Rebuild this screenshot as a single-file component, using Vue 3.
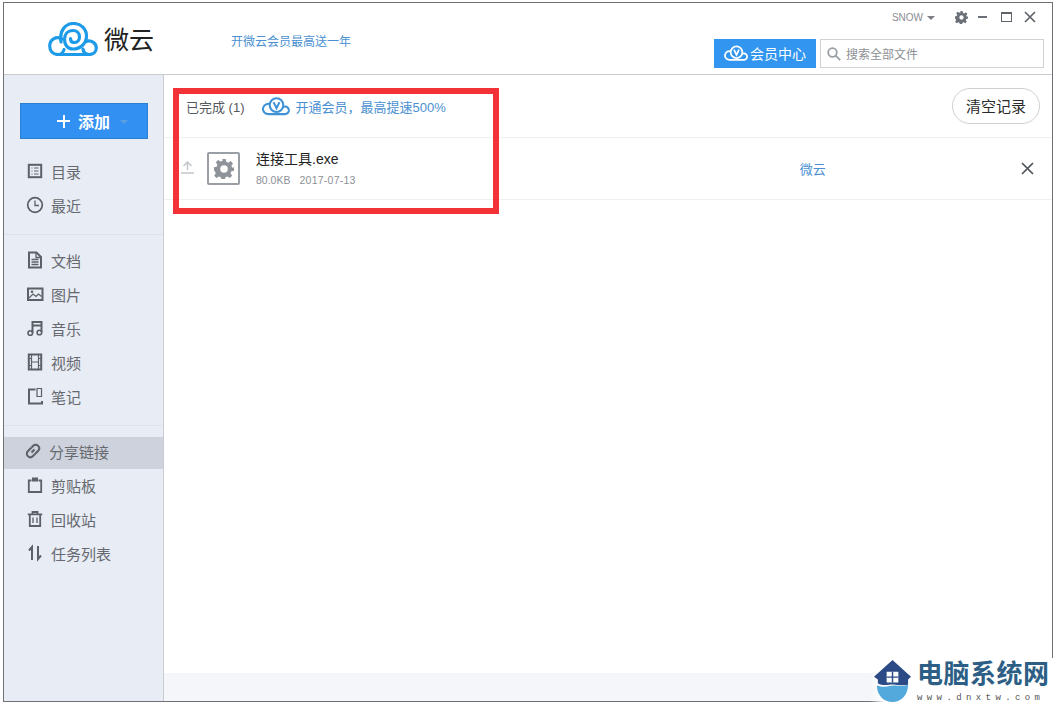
<script setup>
const groups = [
  [
    { icon: 'list', label: '目录' },
    { icon: 'clock', label: '最近' },
  ],
  [
    { icon: 'doc', label: '文档' },
    { icon: 'image', label: '图片' },
    { icon: 'music', label: '音乐' },
    { icon: 'film', label: '视频' },
    { icon: 'note', label: '笔记' },
  ],
  [
    { icon: 'link', label: '分享链接', active: true },
    { icon: 'clip', label: '剪贴板' },
    { icon: 'trash', label: '回收站' },
    { icon: 'sort', label: '任务列表' },
  ],
]
</script>

<template>
  <div class="window">
    <header class="topbar">
      <div class="brand">
        <svg class="logo" width="50" height="34" viewBox="0 0 50 34" fill="none" stroke="#1d9be8" stroke-width="3.200" stroke-linecap="round">
          <path d="M13 20C11 8 18 1.500 25.500 1.500C33 1.500 38.500 7 38.500 14C38.500 22 32 27 25 27C19 27 16.500 22 16.500 17.500C16.500 12 20 8.500 25 8.500C29 8.500 31.500 11.500 31.500 15C31.500 18.500 29 20.500 26 20.500C23.500 20.500 22.500 18.500 22.500 16.500" />
          <path d="M14 17C8 13.500 1.700 18 1.700 24C1.700 29 5 32.500 10 32.500H41C45.500 32.500 48.300 29.500 48.300 26C48.300 21 43 17.500 38 19.500" />
          <path d="M10 32.500C13 32.500 15.500 30 16 27.500M41 32.500C38 32.500 35.500 30.500 35 27" />
        </svg>
        <span class="brand-name">微云</span>
      </div>
      <a class="promo">开微云会员最高送一年</a>
      <div class="top-right">
        <div class="window-bar">
          <span class="user">SNOW</span>
          <i class="caret"></i>
          <svg class="gear" width="13" height="13" viewBox="0 0 24 24">
            <path fill="#6b7078" fill-rule="evenodd" d="M10 0h4l.7 3.400 2.400 1 2.900-1.900 2.800 2.800-1.900 2.900 1 2.400L24 10v4l-3.100.7-1 2.400 1.900 2.900-2.800 2.800-2.900-1.900-2.400 1-.7 3.100h-4l-.7-3.100-2.400-1-2.900 1.900-2.800-2.800 1.900-2.900-1-2.400L0 14v-4l3.100-.7 1-2.400-1.900-2.900L5 1.200l2.900 1.900 2.400-1zM12 8a4 4 0 1 0 0 8 4 4 0 0 0 0-8z" />
          </svg>
          <i class="min"></i>
          <i class="max"></i>
          <svg class="close" width="12" height="12" viewBox="0 0 12 12" stroke="#5f646b" stroke-width="1.700"><path d="M1 1l10 10M11 1L1 11" /></svg>
        </div>
        <div class="tools">
          <button class="vip-btn">
            <svg width="25" height="16" viewBox="0 0 34 22" fill="none" stroke="#fff" stroke-width="2.400">
              <path d="M10.500 9.500A6 6 0 1 0 7 20.500H27.500A4.500 4.500 0 1 0 25 12" />
              <circle cx="17" cy="10" r="8" fill="#3296f0" />
              <path d="M13.500 6.500l3.500 7 3.500-7" />
            </svg>
            <span>会员中心</span>
          </button>
          <label class="search">
            <svg width="14" height="14" viewBox="0 0 14 14" fill="none" stroke="#9a9fa6" stroke-width="1.800"><circle cx="5.500" cy="5.500" r="4.300" /><path d="M8.700 8.700l4.500 4.500" /></svg>
            <span>搜索全部文件</span>
          </label>
        </div>
      </div>
    </header>

    <div class="body">
      <aside class="sidebar">
        <div class="add-wrap">
          <button class="add-btn"><b class="plus"></b><span>添加</span><i class="add-caret"></i></button>
        </div>
        <nav class="groups">
          <ul v-for="(group, i) in groups" :key="i" class="group">
            <li v-for="item in group" :key="item.label" class="item" :class="{ active: item.active }">
              <svg class="ico" width="18" height="18" viewBox="0 0 18 18" fill="none" stroke="#5c6067" stroke-width="2">
                <template v-if="item.icon === 'list'">
                  <rect x="2.800" y="2.800" width="12.400" height="12.400" />
                  <path stroke-width="1.100" d="M5.500 6h1M8 6h4.500M5.500 9h1M8 9h4.500M5.500 12h1M8 12h4.500" />
                </template>
                <template v-else-if="item.icon === 'clock'">
                  <circle cx="9" cy="9" r="7.300" stroke-width="1.700" />
                  <path stroke-width="1.300" d="M9 4.500V9.500H13" />
                </template>
                <template v-else-if="item.icon === 'doc'">
                  <path d="M3 1.500h7.500l4.500 4.500v10.500H3z" />
                  <path stroke-width="1.300" d="M10 1.500v5h5M5.500 8.500h7M5.500 11h7M5.500 13.500h7" />
                </template>
                <template v-else-if="item.icon === 'image'">
                  <rect x="2" y="3.500" width="14.500" height="11.500" />
                  <path stroke-width="1.200" d="M3 13l4-4 3 2.500 2.500-2.500 3 2.500" />
                  <circle cx="6" cy="6.800" r="1.300" fill="#5c6067" stroke="none" />
                </template>
                <template v-else-if="item.icon === 'music'">
                  <path d="M6.500 14V3H15.500V13" />
                  <path d="M6.500 6.500h9" />
                  <circle cx="4.300" cy="14" r="2.300" stroke-width="1.600" />
                  <circle cx="13.400" cy="13.500" r="2.300" stroke-width="1.600" />
                </template>
                <template v-else-if="item.icon === 'film'">
                  <rect x="2.800" y="1.500" width="12.400" height="15" />
                  <path stroke-width="1.200" d="M5.500 1.500v15M12.500 1.500v15M5.500 9h7M3 5.500h2.500M3 12.500h2.500M12.500 5.500h2.500M12.500 12.500h2.500" />
                </template>
                <template v-else-if="item.icon === 'note'">
                  <path d="M9.500 2.500H3v14h13v-2.500" />
                  <path stroke-width="1.200" d="M11 1.500h4.500V9.500H11z" />
                </template>
                <template v-else-if="item.icon === 'link'">
                  <path stroke-width="2" d="M7.500 5.500L4 9c-3.500 3.500 1.500 8.500 5 5l1.500-1.500" />
                  <path stroke-width="2" d="M10.500 12.500L14 9c3.500-3.500-1.500-8.500-5-5L7.500 5.500M7.500 10.500l3-3" />
                </template>
                <template v-else-if="item.icon === 'clip'">
                  <path stroke-width="1.800" d="M5.500 4.500H2.800v11.500h12.400V4.500H12.500" />
                  <rect x="6" y="1.500" width="6" height="4" fill="#5c6067" stroke="none" />
                </template>
                <template v-else-if="item.icon === 'trash'">
                  <path stroke-width="1.800" d="M1.800 4.300h14.400M6.500 4V2h5v2M3.800 4.500V16h10.400V4.500" />
                  <path stroke-width="1.300" d="M7 7.500v5.500M11 7.500v5.500" />
                </template>
                <template v-else>
                  <path stroke-width="2" d="M6 16V3L3 6.500M12 2v13l3-3.500" />
                </template>
              </svg>
              <span>{{ item.label }}</span>
            </li>
          </ul>
        </nav>
      </aside>

      <main class="content">
        <div class="list-head">
          <span class="done">已完成 (1)</span>
          <svg class="vip-mark" width="29" height="20" viewBox="0 0 34 22" fill="none" stroke="#3f92d6" stroke-width="2.400">
            <path d="M10.500 9.500A6 6 0 1 0 7 20.500H27.500A4.500 4.500 0 1 0 25 12" />
            <circle cx="17" cy="10" r="8" fill="#fff" />
            <path d="M13.500 6.500l3.500 7 3.500-7" />
          </svg>
          <a class="speed">开通会员，最高提速500%</a>
          <button class="clear">清空记录</button>
        </div>
        <div class="file-row">
          <svg class="upload" width="13" height="15" viewBox="0 0 13 15" fill="none" stroke="#c3c6ca" stroke-width="1.500"><path d="M6.500 10V2M2.500 6l4-4 4 4M0 13h13" /></svg>
          <div class="file-icon">
            <svg width="20" height="20" viewBox="0 0 24 24">
              <path fill="#8f949b" fill-rule="evenodd" d="M10 0h4l.7 3.400 2.400 1 2.900-1.900 2.800 2.800-1.900 2.900 1 2.400L24 10v4l-3.100.7-1 2.400 1.900 2.900-2.800 2.800-2.900-1.900-2.400 1-.7 3.100h-4l-.7-3.100-2.400-1-2.900 1.900-2.800-2.800 1.900-2.900-1-2.400L0 14v-4l3.100-.7 1-2.400-1.900-2.900L5 1.200l2.900 1.900 2.400-1zM12 7.500a4.500 4.500 0 1 0 0 9 4.500 4.500 0 0 0 0-9z" />
            </svg>
          </div>
          <div class="file-info">
            <div class="file-name">连接工具.exe</div>
            <div class="file-meta"><span>80.0KB</span><span class="file-date">2017-07-13</span></div>
          </div>
          <a class="source">微云</a>
          <svg class="remove" width="13" height="13" viewBox="0 0 13 13" stroke="#4f5359" stroke-width="1.700"><path d="M1 1l11 11M12 1L1 12" /></svg>
        </div>
        <div class="spacer"></div>
        <div class="status"></div>
      </main>
    </div>

    <div class="highlight"></div>
  </div>

  <div class="watermark">
    <svg width="37" height="43" viewBox="0 0 38 44">
      <path fill="#54a9dc" d="M3 26c8 3 12 0 17 0 6 0 10 2 15-1 0 11-7 18-16 18S3 36 3 26z" />
      <path fill="#2c4a86" d="M19 0L38 17l-3 3v5c-7 2-10 0-15 0-6 0-10 2-16-1v-4l-4-3z" />
      <rect x="13" y="12" width="12" height="11" fill="#fff" />
      <path stroke="#2c4a86" stroke-width="1.500" d="M19 12v11M13 17.500h12" />
    </svg>
    <div class="wm-text">
      <div class="wm-title">电脑系统网</div>
      <div class="wm-url">www.dnxtw.com</div>
    </div>
  </div>
</template>

<style>
html,
body {
  margin: 0;
  background: #fff;
}
</style>

<style scoped>
* {
  box-sizing: border-box;
}
.window {
  position: relative;
  margin: 2px 0 0 3px;
  width: 1050px;
  height: 700px;
  border: 1px solid #6e7176;
  background: #fff;
  display: flex;
  flex-direction: column;
  overflow: hidden;
  font-family: "Liberation Sans", "Noto Sans CJK SC", sans-serif;
  color: #555;
}
.topbar {
  height: 72px;
  flex: none;
  border-bottom: 1px solid #c9cbce;
  display: flex;
  position: relative;
}
.brand {
  width: 227px;
  flex: none;
  display: flex;
  align-items: flex-start;
  padding: 19px 0 0 44px;
}
.brand-name {
  font-size: 25px;
  line-height: 36px;
  margin-left: 6px;
  color: #222;
}
.promo {
  margin-top: 30px;
  font-size: 12px;
  line-height: 18px;
  color: #4a90d2;
}
.top-right {
  margin-left: auto;
  padding-right: 8px;
  display: flex;
  flex-direction: column;
  align-items: flex-end;
}
.window-bar {
  height: 36px;
  display: flex;
  align-items: center;
  padding-right: 8px;
  padding-bottom: 8px;
}
.user {
  font-size: 10px;
  color: #8b8e93;
}
.caret {
  width: 0;
  height: 0;
  margin: 1px 0 0 4px;
  border: 4px solid transparent;
  border-top: 4px solid #7b7e83;
  border-bottom: 0;
}
.gear {
  margin-left: 20px;
}
.min {
  width: 9px;
  height: 2px;
  margin-left: 10px;
  background: #6b7078;
}
.max {
  width: 11px;
  height: 10px;
  margin-left: 14px;
  border: 1px solid #5f646b;
  border-top-width: 2px;
}
.close {
  margin-left: 12px;
}
.tools {
  display: flex;
  gap: 4px;
}
.vip-btn {
  width: 102px;
  height: 29px;
  border: 0;
  padding: 0 0 2px 10px;
  background: #3296f0;
  color: #fff;
  display: flex;
  align-items: center;
  gap: 1px;
  font: inherit;
  font-size: 14px;
}
.search {
  width: 224px;
  height: 29px;
  border: 1px solid #cfd2d6;
  display: flex;
  align-items: center;
  gap: 5px;
  padding-left: 6px;
  font-size: 12px;
  color: #8c8f94;
}
.body {
  flex: 1;
  display: flex;
  min-height: 0;
}
.sidebar {
  width: 160px;
  flex: none;
  background: #e8ecf4;
  border-right: 1px solid #c9ccd3;
}
.add-wrap {
  padding: 28px 15px 0 16px;
}
.add-btn {
  width: 128px;
  height: 36px;
  border: 1px solid #2a7fd0;
  background: #3290f2;
  color: #fff;
  display: flex;
  align-items: center;
  padding: 0 0 0 36px;
  font: inherit;
  font-size: 16px;
  font-weight: 700;
}
.plus {
  width: 13px;
  height: 13px;
  margin-right: 8px;
  background:
    linear-gradient(#fff, #fff) center / 13px 2px no-repeat,
    linear-gradient(#fff, #fff) center / 2px 13px no-repeat;
}
.add-caret {
  width: 0;
  height: 0;
  margin: 2px 0 0 10px;
  border: 4px solid transparent;
  border-top: 4px solid #5a9fe0;
  border-bottom: 0;
}
.groups {
  padding-top: 15px;
}
.group {
  list-style: none;
  margin: 0 0 8px;
  padding: 0 0 12px;
  border-bottom: 1px solid #dde1e8;
}
.group:last-child {
  padding-top: 1px;
  border-bottom: 0;
}
.item {
  height: 34px;
  display: flex;
  align-items: center;
  padding-left: 22px;
  gap: 7px;
  font-size: 15px;
  color: #66696f;
}
.item.active {
  height: 32px;
  margin: 2px 0 -1px;
  padding-bottom: 4px;
  padding-left: 20px;
  background: #cdd2dc;
}
.content {
  flex: 1;
  min-width: 0;
  display: flex;
  flex-direction: column;
}
.list-head {
  height: 63px;
  flex: none;
  border-bottom: 1px solid #f0f1f3;
  display: flex;
  align-items: center;
  padding: 0 12px 0 22px;
  font-size: 13px;
}
.done {
  color: #55585d;
}
.vip-mark {
  margin-left: 17px;
}
.speed {
  margin-left: 5px;
  color: #4a90d2;
}
.clear {
  margin-left: auto;
  width: 88px;
  height: 36px;
  margin-top: 0;
  padding: 0 0 2px;
  border: 1px solid #cdd0d4;
  border-radius: 18px;
  background: #fff;
  color: #2b2b2b;
  font: inherit;
  font-size: 15px;
}
.file-row {
  height: 62px;
  flex: none;
  border-bottom: 1px solid #eef0f2;
  display: flex;
  align-items: center;
  padding-left: 17px;
}
.upload {
  margin-top: -3px;
}
.file-icon {
  width: 33px;
  height: 33px;
  margin-left: 13px;
  border: 2px solid #9a9ea5;
  border-radius: 2px;
  display: flex;
  align-items: center;
  justify-content: center;
}
.file-info {
  margin-left: 16px;
}
.file-name {
  margin-top: -1px;
  font-size: 14px;
  line-height: 20px;
  color: #222;
}
.file-meta {
  margin-top: 3px;
  display: flex;
  gap: 9px;
  font-size: 10.500px;
  line-height: 16px;
  color: #8d9094;
}
.file-date {
  letter-spacing: 0.250px;
}
.source {
  margin-left: 444px;
  font-size: 13px;
  color: #4a90d2;
}
.remove {
  margin-left: auto;
  margin-right: 18px;
}
.spacer {
  flex: 1;
}
.status {
  height: 28px;
  flex: none;
  background: #f5f6f9;
}
.highlight {
  position: absolute;
  left: 169px;
  top: 85px;
  width: 326px;
  height: 126px;
  border: 6px solid #f23237;
  pointer-events: none;
}
.watermark {
  position: absolute;
  right: 3px;
  top: 658px;
  width: 184px;
  height: 48px;
  padding: 2px 0 0 4px;
  display: flex;
  gap: 6px;
  background: linear-gradient(90deg, rgba(255, 255, 255, 0), #fff 8%);
  font-family: "Liberation Serif", "Noto Sans CJK SC", serif;
}
.wm-title {
  font-size: 26px;
  line-height: 30px;
  font-weight: 700;
  letter-spacing: 0.500px;
  color: #2d5f86;
  white-space: nowrap;
}
.wm-url {
  margin-top: 2px;
  font-size: 9px;
  line-height: 12px;
  letter-spacing: 4.400px;
  color: #555;
  font-family: "Liberation Mono", monospace;
  white-space: nowrap;
}
</style>
